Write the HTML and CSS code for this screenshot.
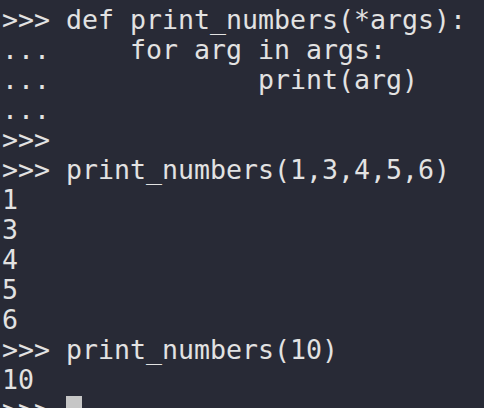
FILE: index.html
```html
<!DOCTYPE html>
<html>
<head>
<meta charset="utf-8">
<link rel="stylesheet" href="styles.css">
</head>
<body>
<pre class="term">&gt;&gt;&gt; def print_numbers(*args):
...     for arg in args:
...             print(arg)
...
&gt;&gt;&gt;
&gt;&gt;&gt; print_numbers(1,3,4,5,6)
1
3
4
5
6
&gt;&gt;&gt; print_numbers(10)
10
&gt;&gt;&gt; <span class="cursor"></span></pre>
</body>
</html>
```

FILE: styles.css
```css
html, body {
  margin: 0;
  padding: 0;
  background: #282a36;
  width: 484px;
  height: 408px;
  overflow: hidden;
}
.term {
  margin: 0;
  padding: 5px 0 0 2px;
  font-family: "DejaVu Sans Mono", "Liberation Mono", monospace;
  font-size: 26.58px;
  line-height: 30px;
  color: #e2e2e2;
  white-space: pre;
}
.cursor {
  display: inline-block;
  width: 16px;
  height: 26px;
  margin-top: 1px;
  vertical-align: top;
  background: #c6c6c6;
}
```
